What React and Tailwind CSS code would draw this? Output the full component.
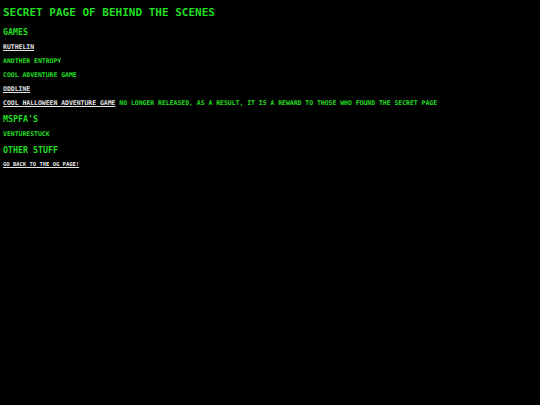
import React from 'react';

const mono = { fontFamily: '"DejaVu Sans Mono", "Liberation Mono", monospace' };

const Line = ({ children }) => (
  <div className="h-[14px] leading-[14px] text-[6.45px]">{children}</div>
);

const A = ({ children, className = '' }) => (
  <a href="#" className={`text-[#e4e4e4] underline decoration-[#e4e4e4] ${className}`}>{children}</a>
);

export default function App() {
  return (
    <div className="min-h-[405px] w-full bg-black px-[3px] font-bold uppercase text-[#22dd22]" style={mono}>
      <h1 className="h-[25px] text-[11px] leading-[25px]">Secret page of behind the scenes</h1>
      <h2 className="h-[15px] text-[8.3px] leading-[15px]">Games</h2>
      <Line><A>Ruthelin</A></Line>
      <Line>Another Entropy</Line>
      <Line>Cool Adventure Game</Line>
      <Line><A>Oddline</A></Line>
      <Line>
        <A>Cool Halloween Adventure Game</A> No longer released, as a result, it is a reward to those who found the secret page
      </Line>
      <h2 className="h-[17px] text-[8.3px] leading-[18px]">MSPFA's</h2>
      <Line>Venturestuck</Line>
      <h2 className="h-[18px] text-[8.3px] leading-[18px]">Other stuff</h2>
      <div className="h-[10px] text-[5.5px] leading-[10px]">
        <A>Go back to the OG page!</A>
      </div>
    </div>
  );
}
